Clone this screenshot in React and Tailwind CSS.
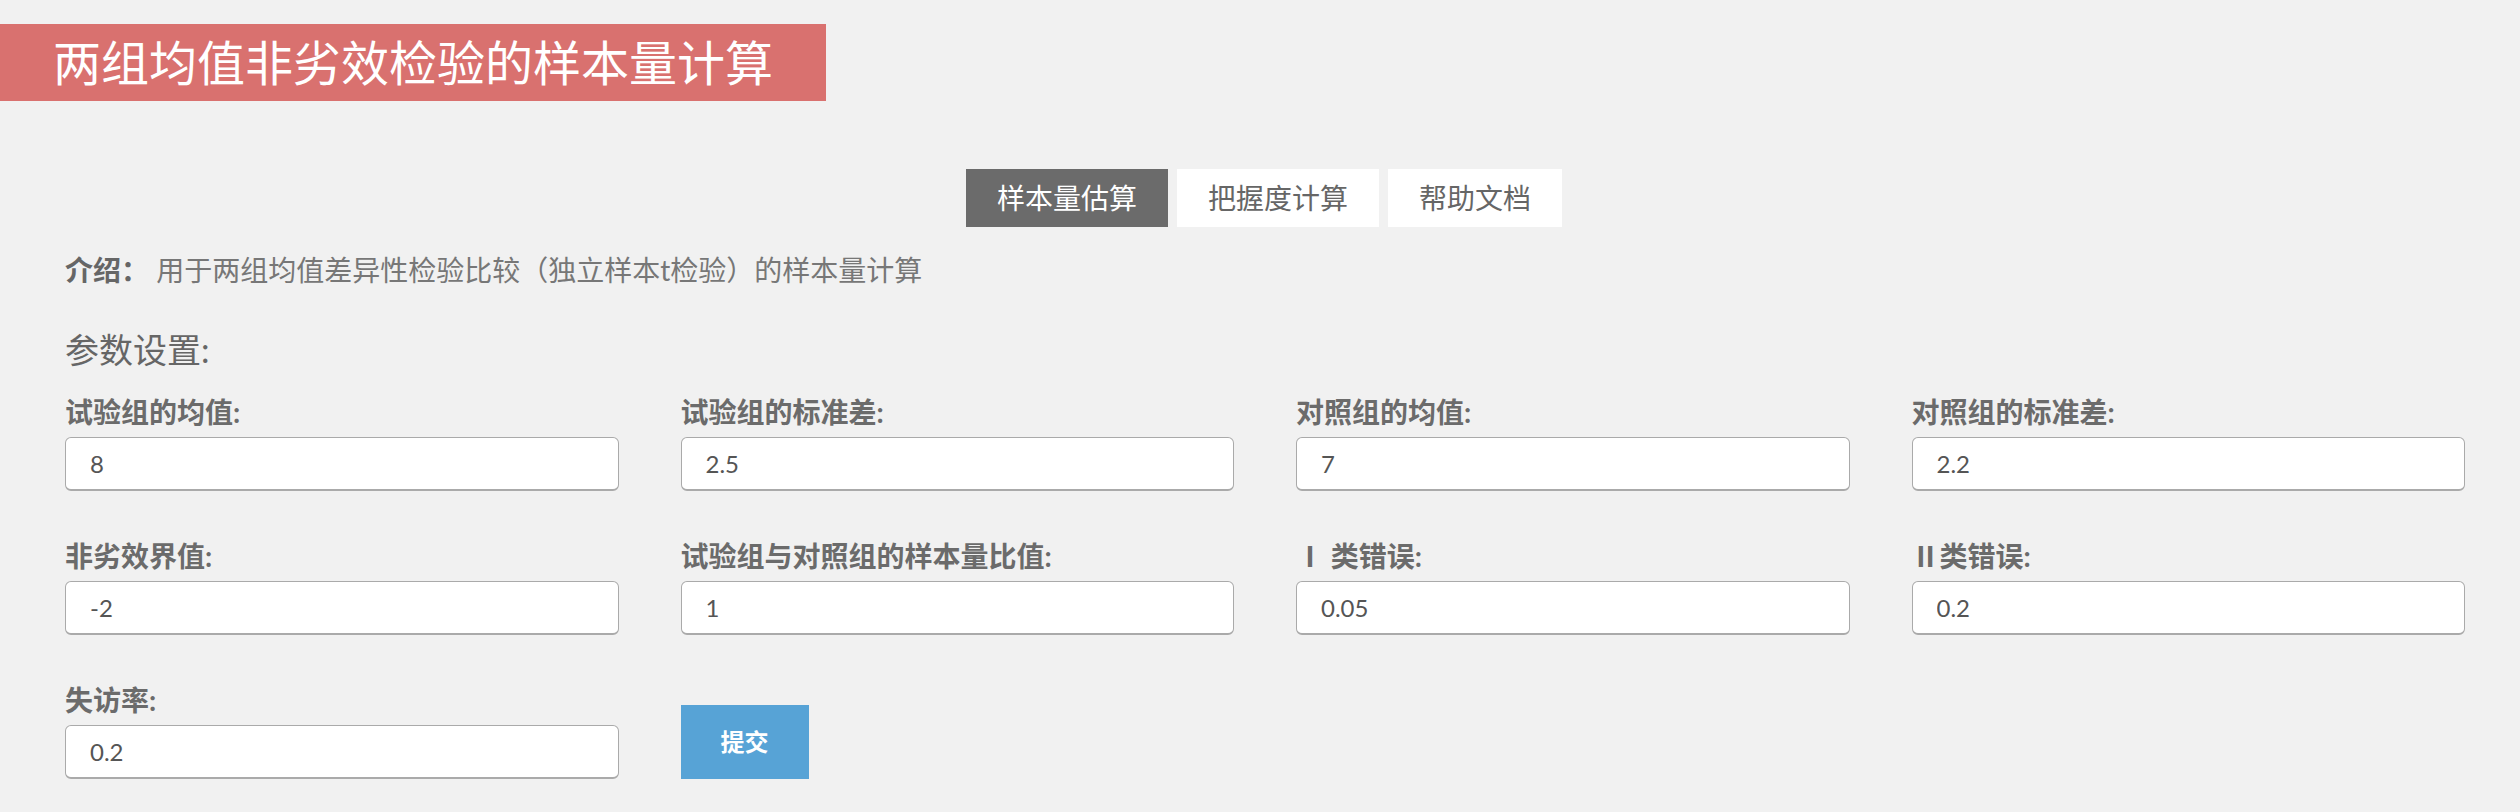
const fields = [
  { label: "试验组的均值:", value: "8" },
  { label: "试验组的标准差:", value: "2.5" },
  { label: "对照组的均值:", value: "7" },
  { label: "对照组的标准差:", value: "2.2" },
  { label: "非劣效界值:", value: "-2" },
  { label: "试验组与对照组的样本量比值:", value: "1" },
  { label: "Ⅰ 类错误:", value: "0.05" },
  { label: "Ⅱ类错误:", value: "0.2" },
  { label: "失访率:", value: "0.2" },
];

const tabs = ["样本量估算", "把握度计算", "帮助文档"];

function Field({ label, value }) {
  return (
    <div className="flex flex-col">
      <label className="h-[40px] text-[28px] font-bold leading-[40px] text-[#6b6b6b]">{label}</label>
      <input
        defaultValue={value}
        className="mt-[5px] h-[54px] w-full rounded-md border border-b-2 border-[#aaa] bg-white px-[24px] text-[24px] text-[#555] outline-none"
      />
    </div>
  );
}

export default function App() {
  return (
    <div
      className="min-h-[812px] bg-[#f1f1f1] pt-[24px]"
      style={{ fontFamily: 'Lato, "Noto Sans CJK SC", sans-serif' }}
    >
      <div className="inline-block h-[77px] bg-[#d9716f] px-[53px] text-[48px] leading-[77px] text-white">
        两组均值非劣效检验的样本量计算
      </div>

      <div className="mt-[68px] flex justify-center gap-[9px] pl-[8px]">
        {tabs.map((t, i) => (
          <button
            key={t}
            className={
              i === 0
                ? "h-[58px] bg-[#6b6b6b] px-[31px] text-[28px] text-white"
                : "h-[58px] bg-white px-[31px] text-[28px] text-[#666]"
            }
          >
            {t}
          </button>
        ))}
      </div>

      <div className="pl-[65px] pr-[55px]">
        <p className="mt-[23px] text-[28px] leading-[40px] text-[#777]">
          <span className="font-bold text-[#666]">介绍：</span> 用于两组均值差异性检验比较（独立样本t检验）的样本量计算
        </p>

        <h2 className="mt-[36px] text-[34px] leading-[48px] text-[#666]">参数设置:</h2>

        <div className="mt-[18px] grid grid-cols-4 gap-x-[62px] gap-y-[45px]">
          {fields.map((f) => (
            <Field key={f.label} label={f.label} value={f.value} />
          ))}
          <div className="flex items-end">
            <button className="h-[74px] w-[128px] bg-[#57a3d6] text-[24px] font-bold text-white">提交</button>
          </div>
        </div>
      </div>
    </div>
  );
}
